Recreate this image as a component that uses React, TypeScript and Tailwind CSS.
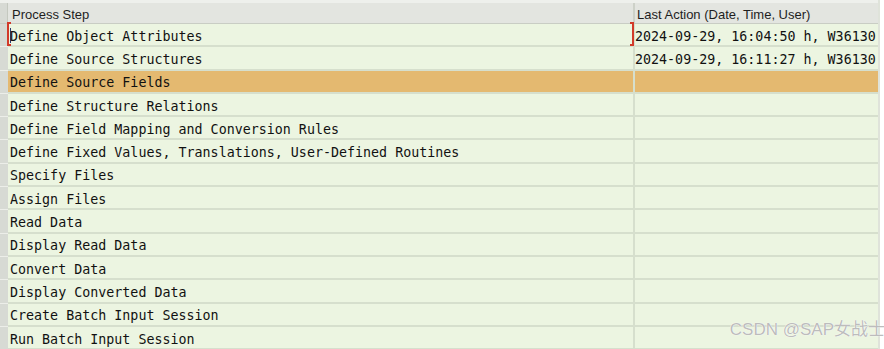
import React from "react";

const rows = [
  ["Define Object Attributes", "2024-09-29, 16:04:50 h, W36130"],
  ["Define Source Structures", "2024-09-29, 16:11:27 h, W36130"],
  ["Define Source Fields", ""],
  ["Define Structure Relations", ""],
  ["Define Field Mapping and Conversion Rules", ""],
  ["Define Fixed Values, Translations, User-Defined Routines", ""],
  ["Specify Files", ""],
  ["Assign Files", ""],
  ["Read Data", ""],
  ["Display Read Data", ""],
  ["Convert Data", ""],
  ["Display Converted Data", ""],
  ["Create Batch Input Session", ""],
  ["Run Batch Input Session", ""],
];

const mono = { fontFamily: '"DejaVu Sans Mono", "Liberation Mono", monospace' };
const sans = { fontFamily: '"Liberation Sans", Arial, sans-serif' };

export default function App() {
  return (
    <div className="relative w-[884px] h-[349px] overflow-hidden bg-white flex">
      <div className="w-[880px] flex flex-col border-r-2 border-[#dfe3da]">
        {/* header */}
        <div className="flex h-[24px] shrink-0 bg-[#e3e5e0] border-t-[3px] border-t-[#eef0ec] border-b border-b-[#c9cdc4]">
          <div className="w-[8px] bg-[#d7dad4] border-r border-[#c4c8bf]" />
          <div
            className="w-[627px] border-r-2 border-[#cdd1c8] pl-[4px] pt-[3px] flex items-center text-[13px] text-[#1e1e1e]"
            style={sans}
          >
            Process Step
          </div>
          <div
            className="flex-1 pl-[2px] pt-[3px] flex items-center text-[13px] text-[#1e1e1e]"
            style={sans}
          >
            Last Action (Date, Time, User)
          </div>
        </div>
        {rows.map(([a, b], i) => {
          const hl = i === 2;
          return (
            <div key={i} className="flex h-[23.3px] shrink-0">
              <div className="w-[8px] bg-[#d7dad4] border-b border-[#eceee9]" />
              <div
                className={`relative w-[627px] border-r-2 border-b-2 border-[#d6dfcd] pl-[2px] pt-[4px] flex items-center text-[13.33px] text-[#111] whitespace-nowrap ${hl ? "bg-[#e4b970]" : "bg-[#ecf5e1]"}`}
                style={mono}
              >
                {i === 0 && (
                  <>
                    <span className="absolute left-[-1px] top-[-2px] bottom-[-1px] w-[4px] border-l-2 border-t-2 border-b-2 border-[#d23a2a]" />
                    <span className="absolute left-[2px] top-[4px] h-[15px] w-[1px] bg-[#2c3a70]" />
                  </>
                )}
                <span className="inline-block scale-y-[1.12]">{a}</span>
              </div>
              <div
                className={`relative flex-1 border-b-2 border-[#d6dfcd] pl-[0px] pt-[4px] flex items-center text-[13.33px] text-[#111] whitespace-nowrap ${hl ? "bg-[#e4b970]" : "bg-[#ecf5e1]"}`}
                style={mono}
              >
                {i === 0 && (
                  <span className="absolute left-[-5px] top-[-2px] bottom-[-1px] w-[4px] border-r-2 border-t-2 border-b-2 border-[#d23a2a]" />
                )}
                <span className="inline-block scale-y-[1.12]">{b}</span>
              </div>
            </div>
          );
        })}
      </div>
      <div className="flex-1 bg-white" />
      <div
        className="absolute right-[-1px] bottom-[7px] text-[17px] text-[#bcbcbc] whitespace-nowrap"
        style={{
          fontFamily: '"Liberation Sans", Arial, "Noto Sans CJK SC", sans-serif',
          textShadow: "0 0 1px #ffffff, 0 0 1px #ffffff",
        }}
      >
        CSDN @SAP女战士
      </div>
    </div>
  );
}
